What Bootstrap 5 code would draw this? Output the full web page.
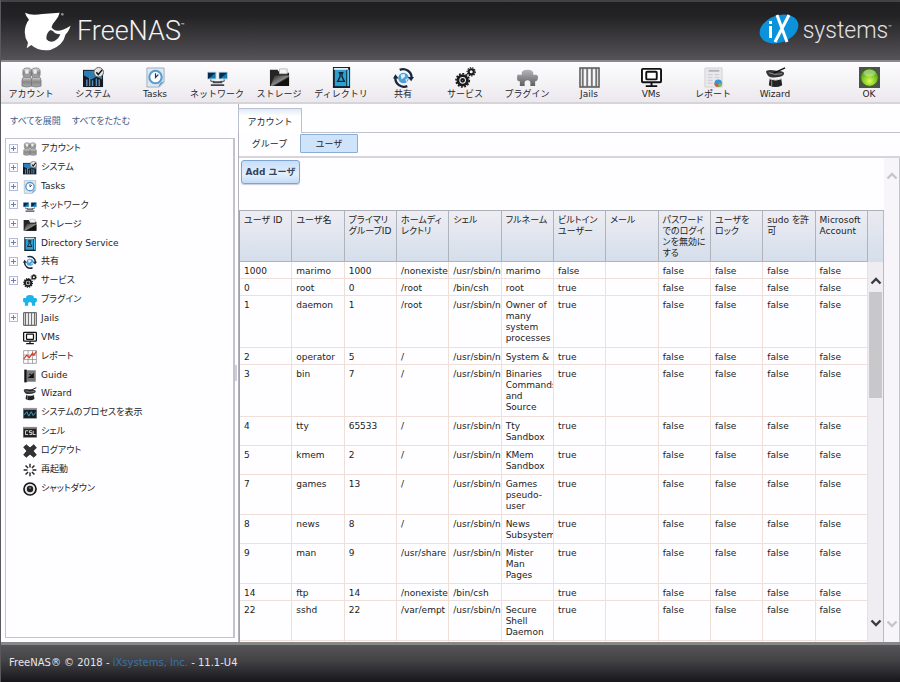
<!DOCTYPE html>
<html lang="ja">
<head>
<meta charset="utf-8">
<meta name="viewport" content="width=device-width, initial-scale=1">
<title>FreeNAS</title>
<link href="https://cdn.jsdelivr.net/npm/bootstrap@5.3.0/dist/css/bootstrap.min.css" rel="stylesheet">
<style>
body{font-family:"DejaVu Sans","Noto Sans CJK JP",sans-serif;font-size:9px;line-height:12px;color:#1c1c24;background:#fefdff;font-feature-settings:"palt";border-left:1px solid #59585c;overflow:hidden}
a{text-decoration:none}
.masthead{height:62px;flex:none;background:linear-gradient(#1f1e20,#232224 25%,#555357);border-top:2px solid #434244;border-bottom:2px solid #89888b;padding:0 8px 0 22px}
.brand-word{font-family:"Roboto",sans-serif;font-weight:300;font-size:27px;line-height:36px;color:#f3f2f4}
.brand-word.second{font-size:23px;line-height:32px;color:#e2e1e3}
.brand-word sup{font-size:6px;font-weight:400;line-height:6px;vertical-align:top;top:9px}
.ix{margin-bottom:4px}
.toolbar{height:42px;flex:none;background:linear-gradient(#fdfcfe,#ebe9ed);border-bottom:2px solid #d6d4d8}
.tool{width:62px;padding:5px 2px 0 0;border:0;background:none;color:#24242c;font-size:9px;line-height:12px;white-space:nowrap}
.tool svg{width:21px;height:21px;display:block;margin:0 auto}
.side{width:234px;flex:none;padding:10px 0 4px 4px}
.side-links{padding:1px 5px 11px;gap:11px}
.side-links a{color:#3f5f8c}
.tree-box{border:1px solid #c3c2cc;border-width:1px 2px 1px 1px}
.tree{height:358px;grid-auto-rows:1fr;margin:0;padding:0 0 0 3px}
.tree li{gap:4px}
.tree button{width:9px;height:9px;padding:0;border:1px solid #b4bcd6;background:#fbfbff;display:grid;place-items:center;margin-right:1px}
.tree button svg{width:5px;height:5px}
.tree .blank{width:9px;margin-right:1px}
.tree .pic{width:14px;height:14px;margin-top:2px}
.tree a{color:#1c1c24}
.splitter{width:3px;flex:none}
.splitter span{width:2px;height:16px;background:#cfced8}
.pane{border-left:1px solid #b3b2bc;padding-top:4px;min-width:0}
.tabs{border-bottom:1px solid #c0c3cb;margin-left:-1px;height:25px}
.tabs button{width:64px;height:25px;border:1px solid #b9bfcd;border-bottom:0;background:linear-gradient(#dfeaf7,#fff 30%);color:#24242c;padding:2px 0 0}
.subtabs{height:25px;padding:1px 0 3px;border-bottom:2px solid #d7d5da}
.subtabs button{border:0;background:none;width:61px;color:#24242c;padding:0}
.subtabs button.on{width:58px;border:1px solid #8aaed3;background:#cfe4fb;border-radius:1px}
.add-btn{font-size:9px;line-height:12px;font-weight:700;color:#35435c;border:1px solid #7da4cf;border-radius:3px;background:linear-gradient(#c7defa,#e2effd 60%,#c4dbf5);height:24px;width:59px;padding:0;white-space:nowrap;margin:2px 0 0 2px;box-shadow:0 1px 1px #ccd;--bs-btn-hover-color:#35435c}
.gridwrap{margin-top:26px;border-top:1px solid #abb0b8}
.users{table-layout:fixed;width:100%;border-left:1px solid #9ea3ab;line-height:11px;font-size:9px;border-collapse:separate;border-spacing:0}
.users th{height:51px;vertical-align:top;font-weight:400;padding:4px 0 0 4px;background:linear-gradient(#eeedf3,#d4deea);border-right:1px solid #afb4bc;border-bottom:1px solid #afb4bc;white-space:nowrap}
.users td{height:17px;vertical-align:top;padding:4px 0 0 4px;border-right:1px solid #f0dfd7;border-bottom:1px solid #efdfd8;overflow:hidden}
.users .l2 td{height:29px}
.users .l3 td{height:40px}
.users .l4 td{height:52px}
.innerbar{width:16px;flex:none;border-right:1px solid #b9bac2}
.innerbar .cap{height:51px;flex:none;background:linear-gradient(#e9eaf2,#d4deea)}
.innerbar .track{background:#efedf1;padding:13px 1px 0}
.innerbar .thumb{height:106px;background:#c8c7ca;margin-top:5px}
.innerbar svg,.outerbar svg{width:12px;height:12px;display:block;margin-left:auto;margin-right:auto;flex:none}
.innerbar svg:last-child{margin-top:auto;margin-bottom:13px}
.outerbar{width:16px;flex:none;background:#f7f5fa;padding:12px 0;border-right:1px solid #c4c3c7}
.foot{height:40px;flex:none;background:linear-gradient(#555456,#444346 40%,#17161b);border-top:3px solid #88878a;color:#e6e5e8;padding:0 8px 2px;font-size:10px}
.foot a{color:#3873ac}
</style>
<script src="https://cdn.jsdelivr.net/npm/bootstrap@5.3.0/dist/js/bootstrap.bundle.min.js"></script>
</head>
<body class="vh-100 d-flex flex-column">
<svg width="0" height="0" class="position-absolute" aria-hidden="true">
<defs>
<linearGradient id="gm" x2="0" y2="1"><stop stop-color="#ddd"/><stop offset=".5" stop-color="#888"/><stop offset="1" stop-color="#aaa"/></linearGradient>
<linearGradient id="gp" x2="0" y2="1"><stop stop-color="#b5b4b7"/><stop offset="1" stop-color="#5e5d61"/></linearGradient>
<linearGradient id="gk" x2="1" y2="1"><stop stop-color="#222"/><stop offset=".5" stop-color="#888"/><stop offset=".6" stop-color="#111"/></linearGradient>
<radialGradient id="gg" cy=".7"><stop stop-color="#d8ff50"/><stop offset="1" stop-color="#62b31c"/></radialGradient>
</defs>
<symbol id="i-users" viewBox="0 0 22 22"><g fill="url(#gm)" stroke="#777" stroke-width=".8"><path d="M1 20V14Q1 10 5 10H8Q11 10 11 14V20Q6 22 1 20ZM11 20V14Q11 10 14 10H17Q21 10 21 14V20Q16 22 11 20Z"/><path d="M2 4Q2 1 6.500 1T11 4V8Q11 11 6.500 11T2 8ZM11 4Q11 1 15.500 1T20 4V8Q20 11 15.500 11T11 8Z"/></g><path d="M4.500 3H8V7H4.500ZM13 3H16.500V7H13Z" fill="#eee"/></symbol>
<symbol id="i-system" viewBox="0 0 22 22"><path d="M0 3H21V21H0Z" fill="#151b24"/><path d="M1 4H20V13L14 10L9 13L1 9Z" fill="#2c7fb4"/><path d="M4 20V13M7 20V11M10 20V14M14 20V12M17 20V13" stroke="#5b8fb6" stroke-width="1.500"/><circle cx="16.500" cy="5.500" r="5" fill="#e5e5e8" stroke="#666"/><path d="M14 5.500L16 8L20 3" fill="none" stroke="#111" stroke-width="1.600"/></symbol>
<symbol id="i-tasks" viewBox="0 0 22 22"><path d="M2 1H20V16L15 21H2Z" fill="#dde7ef" stroke="#9db0bf"/><circle cx="11" cy="10.500" r="6.500" fill="#fff" stroke="#5a9bd0" stroke-width="2.200"/><path d="M11 6.500V11L14 8" fill="none" stroke="#235" stroke-width="1.300"/><path d="M20 15L14 21Q15 16 20 15Z" fill="#4c94cb"/></symbol>
<symbol id="i-network" viewBox="0 0 22 22"><path d="M0 5H10V13H0ZM12 5H22V13H12Z" fill="#c9d3da"/><path d="M1 6H9V12H1ZM13 6H21V12H13Z" fill="#087bb8"/><path d="M1 6H9L2 12H1ZM13 6H21L14 12H13Z" fill="#0a2848"/><path d="M4 13V15H8M18 13V15H14" stroke="#444" fill="none"/><path d="M6 15H16V17H6ZM4 18H18V20H4Z" fill="#41464c"/></symbol>
<symbol id="i-storage" viewBox="0 0 22 22"><path d="M1 3H9L11 6H21V20H1Z" fill="#242424"/><path d="M11 2H19V7H11Z" fill="#f3f3f3" stroke="#bbb"/><path d="M2 19L6 9H21V20H2Z" fill="url(#gk)"/></symbol>
<symbol id="i-directory" viewBox="0 0 22 22"><path d="M2 0H20V22H2Z" fill="#10202c"/><path d="M4 2H16V20H4Z" fill="#2e9fd0"/><path d="M17 3H19V20H17Z" fill="#55c6ef"/><path d="M3 1H18V3H3Z" fill="#d9eef8"/><path d="M8 6H13M9.500 6V10L7 15H14L11.500 10V6" fill="none" stroke="#10202c" stroke-width="1.400"/></symbol>
<symbol id="i-share" viewBox="0 0 22 22"><circle cx="11" cy="11.500" r="5.500" fill="#4b9ed6"/><path d="M8 8L12 7L13 10L9 13ZM13 13L16 11L14 16Z" fill="#d9effb"/><path d="M7 3A9 9 0 0 1 19.500 11M15 20A9 9 0 0 1 2.500 11" fill="none" stroke="#16283f" stroke-width="2.400"/><path d="M15.500 10.500H22L19 15ZM0 12H6L2.500 7.500Z" fill="#16283f"/></symbol>
<symbol id="i-services" viewBox="0 0 22 22"><g fill="none" stroke="#1a1a1a"><circle cx="8" cy="14" r="5" stroke-width="3"/><circle cx="8" cy="14" r="7" stroke-width="1.600" stroke-dasharray="2 1.600"/><circle cx="8" cy="14" r="1.500" stroke-width="2"/><circle cx="17" cy="5" r="2.700" stroke-width="2.200"/><circle cx="17" cy="5" r="4.300" stroke-width="1.200" stroke-dasharray="1.400 1.200"/></g></symbol>
<symbol id="i-plugin" viewBox="0 0 22 22"><path d="M5 8Q4 3 11 3T17 8H20Q22 8 22 11T20 15H19V20H14V17Q14 14 11 14T8 17V20H3V15H2Q0 15 0 11T2 8Z" fill="#1cb2ea"/></symbol>
<symbol id="i-plugin-grey" viewBox="0 0 22 22"><path d="M5 8Q4 3 11 3T17 8H20Q22 8 22 11T20 15H19V20H14V17Q14 14 11 14T8 17V20H3V15H2Q0 15 0 11T2 8Z" fill="url(#gp)"/></symbol>
<symbol id="i-jails" viewBox="0 0 22 22"><path d="M1 1H21V21H1Z" fill="#dcdcde" stroke="#555" stroke-width="1.500"/><path d="M4 1V21M8.500 1V21M13.500 1V21M18 1V21" stroke="#666" stroke-width="1.500"/><path d="M6.300 3V19M15.700 3V19M11 3V19" stroke="#fff" stroke-width="1.500"/></symbol>
<symbol id="i-vms" viewBox="0 0 22 22"><rect x="1" y="2" width="20" height="14" rx="1" fill="#fff" stroke="#111" stroke-width="2"/><rect x="5.500" y="5" width="11" height="8" rx="1" fill="none" stroke="#111" stroke-width="2"/><path d="M11 16V19M5 20H17" stroke="#111" stroke-width="2"/></symbol>
<symbol id="i-report" viewBox="0 0 22 22"><path d="M2 1H20V21H2Z" fill="#e9e9eb" stroke="#d2d2d4"/><path d="M6 4H17" stroke="#b3b3b8" stroke-width="2"/><path d="M5 8H10M12 8H17M5 11H10M12 11H17M5 14H10M5 17H10" stroke="#d0d0d4" stroke-width="1.300"/><circle cx="16" cy="17" r="4" fill="#3c93d5"/><path d="M16 17H20A4 4 0 0 1 16 21Z" fill="#7abf45"/><path d="M16 17V21A4 4 0 0 1 12 17Z" fill="#e2552f"/></symbol>
<symbol id="i-wizard" viewBox="0 0 22 22"><path d="M5 12Q11 15 17 12L18 19Q11 23 4 19Z" fill="#222"/><path d="M1 5Q2 2 12 4Q20 4 20 7T10 11Q3 12 1 5Z" fill="#333"/><path d="M8 7L21 1" stroke="#111" stroke-width="1.500"/><path d="M7 14V20M4 6Q10 9 18 7" stroke="#999" fill="none"/><path d="M5 12.500Q11 15 17 12.500" stroke="#ddd" fill="none"/></symbol>
<symbol id="i-light" viewBox="0 0 22 22"><path d="M0 0H22V22H0Z" fill="#4e524e"/><circle cx="11" cy="11" r="9.300" fill="url(#gg)" stroke="#3d6021"/><ellipse cx="11" cy="6.500" rx="6" ry="3.500" fill="#fff" opacity=".35"/></symbol>
<symbol id="i-chart" viewBox="0 0 22 22"><path d="M1 1H21V21H1ZM1 8H21M1 15H21M8 1V21M15 1V21" fill="#fff" stroke="#777"/><path d="M1 14L6 8L10 12L15 5L17 8L21 2" fill="none" stroke="#d33a22" stroke-width="2"/></symbol>
<symbol id="i-guide" viewBox="0 0 22 22"><path d="M2 1H6V21H2Z" fill="#111"/><path d="M6 2H20V20H6Z" fill="#777"/><path d="M10 8L16 12M16 8V13H10Z" stroke="#111" stroke-width="2" fill="#eee"/></symbol>
<symbol id="i-process" viewBox="0 0 22 22"><path d="M0 3H22V20H0Z" fill="#999"/><path d="M1 6H21V19H1Z" fill="#142027"/><path d="M2 14L6 9L9 16L13 9L16 15L20 10" fill="none" stroke="#4c9eb5" stroke-width="1.500"/></symbol>
<symbol id="i-shell" viewBox="0 0 22 22"><path d="M0 3H22V20H0Z" fill="#888"/><path d="M1 6H21V19H1Z" fill="#221d20"/><path d="M8 9H4V15H8M14 9H10V12H14V15H10M16 9V15H20" fill="none" stroke="#ddd" stroke-width="1.500"/></symbol>
<symbol id="i-logout" viewBox="0 0 22 22"><path d="M5 1L11 6L17 1L21 6L16 11L21 17L17 21L11 16L5 21L1 17L6 11L1 5Z" fill="#333" stroke="#111"/></symbol>
<symbol id="i-reboot" viewBox="0 0 22 22"><path d="M11 1V7M11 15V21M1 11H7M15 11H21M4 4L8 8M14 14L18 18M18 4L14 8M8 14L4 18" stroke="#222" stroke-width="2.200"/></symbol>
<symbol id="i-shutdown" viewBox="0 0 22 22"><circle cx="11" cy="11" r="9.500" fill="#e8e8e8" stroke="#151515" stroke-width="2.600"/><circle cx="11" cy="11" r="5" fill="#222"/><path d="M11 8V11" stroke="#bbb" stroke-width="1.500"/></symbol>
<symbol id="i-plus" viewBox="0 0 5 5"><path d="M0 2H5V3H0ZM2 0H3V5H2Z" fill="#7480a3"/></symbol>
<symbol id="i-up" viewBox="0 0 12 12"><path d="M1.500 8.500L6 4L10.500 8.500" fill="none" stroke="#3c3b3f" stroke-width="2.400"/></symbol>
<symbol id="i-down" viewBox="0 0 12 12"><path d="M1.500 3.500L6 8L10.500 3.500" fill="none" stroke="#3c3b3f" stroke-width="2.400"/></symbol>
</svg>

<header class="masthead d-flex justify-content-between align-items-center">
  <div class="d-flex align-items-center gap-1">
    <svg width="50" height="40" viewBox="70 35 150 120" role="img" aria-label="FreeNAS shark"><path fill="#fff" d="M76 40Q95 50 128 44L180 40Q177 53 166 66Q156 77 156 85L164 92Q180 100 213 79Q206 98 198 105Q190 140 152 152Q115 156 95 137L81 147L85 130Q70 108 78 80Q83 65 88 61Q79 51 76 40Z"/><path fill="#373639" d="M152 92Q139 102 140 119Q147 130 163 126Q178 118 182 105Q166 105 160 95Z"/><circle cx="188" cy="45" r="4" fill="#8d8c8f"/></svg>
    <span class="brand-word">FreeNAS<sup>™</sup></span>
  </div>
  <div class="d-flex align-items-center gap-1">
    <svg class="ix" width="40" height="32" viewBox="0 0 40 32" role="img" aria-label="iX"><ellipse cx="20" cy="16" rx="20" ry="13.500" transform="rotate(-20 20 16)" fill="#0b92da"/><path d="M10 13H13V25H10ZM10 8H13V11H10Z" fill="#fff"/><path d="M18 2L28 29M30 2L16 29" stroke="#fff" stroke-width="3" fill="none"/></svg>
    <span class="brand-word second">systems<sup>™</sup></span>
  </div>
</header>

<nav class="toolbar d-flex align-items-start" aria-label="メイン">
  <button class="tool"><svg><use href="#i-users"/></svg>アカウント</button>
  <button class="tool"><svg><use href="#i-system"/></svg>システム</button>
  <button class="tool"><svg><use href="#i-tasks"/></svg>Tasks</button>
  <button class="tool"><svg><use href="#i-network"/></svg>ネットワーク</button>
  <button class="tool"><svg><use href="#i-storage"/></svg>ストレージ</button>
  <button class="tool"><svg><use href="#i-directory"/></svg>ディレクトリ</button>
  <button class="tool"><svg><use href="#i-share"/></svg>共有</button>
  <button class="tool"><svg><use href="#i-services"/></svg>サービス</button>
  <button class="tool"><svg><use href="#i-plugin-grey"/></svg>プラグイン</button>
  <button class="tool"><svg><use href="#i-jails"/></svg>Jails</button>
  <button class="tool"><svg><use href="#i-vms"/></svg>VMs</button>
  <button class="tool"><svg><use href="#i-report"/></svg>レポート</button>
  <button class="tool"><svg><use href="#i-wizard"/></svg>Wizard</button>
  <button class="tool ms-auto pe-0"><svg><use href="#i-light"/></svg>OK</button>
</nav>

<main class="d-flex flex-grow-1 overflow-hidden">
  <aside class="side d-flex flex-column">
    <div class="side-links d-flex"><a href="#">すべてを展開</a><a href="#">すべてをたたむ</a></div>
    <div class="tree-box flex-grow-1">
      <ul class="tree d-grid list-unstyled">
        <li class="d-flex align-items-center"><button aria-label="展開"><svg><use href="#i-plus"/></svg></button><svg class="pic"><use href="#i-users"/></svg><a href="#">アカウント</a></li>
        <li class="d-flex align-items-center"><button aria-label="展開"><svg><use href="#i-plus"/></svg></button><svg class="pic"><use href="#i-system"/></svg><a href="#">システム</a></li>
        <li class="d-flex align-items-center"><button aria-label="展開"><svg><use href="#i-plus"/></svg></button><svg class="pic"><use href="#i-tasks"/></svg><a href="#">Tasks</a></li>
        <li class="d-flex align-items-center"><button aria-label="展開"><svg><use href="#i-plus"/></svg></button><svg class="pic"><use href="#i-network"/></svg><a href="#">ネットワーク</a></li>
        <li class="d-flex align-items-center"><button aria-label="展開"><svg><use href="#i-plus"/></svg></button><svg class="pic"><use href="#i-storage"/></svg><a href="#">ストレージ</a></li>
        <li class="d-flex align-items-center"><button aria-label="展開"><svg><use href="#i-plus"/></svg></button><svg class="pic"><use href="#i-directory"/></svg><a href="#">Directory Service</a></li>
        <li class="d-flex align-items-center"><button aria-label="展開"><svg><use href="#i-plus"/></svg></button><svg class="pic"><use href="#i-share"/></svg><a href="#">共有</a></li>
        <li class="d-flex align-items-center"><button aria-label="展開"><svg><use href="#i-plus"/></svg></button><svg class="pic"><use href="#i-services"/></svg><a href="#">サービス</a></li>
        <li class="d-flex align-items-center"><span class="blank"></span><svg class="pic"><use href="#i-plugin"/></svg><a href="#">プラグイン</a></li>
        <li class="d-flex align-items-center"><button aria-label="展開"><svg><use href="#i-plus"/></svg></button><svg class="pic"><use href="#i-jails"/></svg><a href="#">Jails</a></li>
        <li class="d-flex align-items-center"><span class="blank"></span><svg class="pic"><use href="#i-vms"/></svg><a href="#">VMs</a></li>
        <li class="d-flex align-items-center"><span class="blank"></span><svg class="pic"><use href="#i-chart"/></svg><a href="#">レポート</a></li>
        <li class="d-flex align-items-center"><span class="blank"></span><svg class="pic"><use href="#i-guide"/></svg><a href="#">Guide</a></li>
        <li class="d-flex align-items-center"><span class="blank"></span><svg class="pic"><use href="#i-wizard"/></svg><a href="#">Wizard</a></li>
        <li class="d-flex align-items-center"><span class="blank"></span><svg class="pic"><use href="#i-process"/></svg><a href="#">システムのプロセスを表示</a></li>
        <li class="d-flex align-items-center"><span class="blank"></span><svg class="pic"><use href="#i-shell"/></svg><a href="#">シェル</a></li>
        <li class="d-flex align-items-center"><span class="blank"></span><svg class="pic"><use href="#i-logout"/></svg><a href="#">ログアウト</a></li>
        <li class="d-flex align-items-center"><span class="blank"></span><svg class="pic"><use href="#i-reboot"/></svg><a href="#">再起動</a></li>
        <li class="d-flex align-items-center"><span class="blank"></span><svg class="pic"><use href="#i-shutdown"/></svg><a href="#">シャットダウン</a></li>
      </ul>
    </div>
  </aside>
  <div class="splitter d-flex align-items-center"><span></span></div>

  <section class="pane flex-grow-1 d-flex flex-column">
    <div class="tabs flex-shrink-0"><button>アカウント</button></div>
    <div class="subtabs d-flex flex-shrink-0"><button>グループ</button><button class="on">ユーザ</button></div>
    <div class="d-flex flex-grow-1 overflow-hidden">
      <div class="flex-grow-1 d-flex flex-column overflow-hidden">
        <div><button class="add-btn btn">Add ユーザ</button></div>
        <div class="gridwrap d-flex flex-grow-1 overflow-hidden">
          <div class="flex-grow-1 overflow-hidden">
          <table class="users">
            <thead><tr><th>ユーザ ID</th><th>ユーザ名</th><th>プライマリ<br>グループID</th><th>ホームディ<br>レクトリ</th><th>シェル</th><th>フルネーム</th><th>ビルトイン<br>ユーザー</th><th>メール</th><th>パスワード<br>でのログイ<br>ンを無効に<br>する</th><th>ユーザを<br>ロック</th><th>sudo を許<br>可</th><th>Microsoft<br>Account</th></tr></thead>
            <tbody>
            <tr><td>1000</td><td>marimo</td><td>1000</td><td>/nonexiste</td><td>/usr/sbin/n</td><td>marimo</td><td>false</td><td></td><td>false</td><td>false</td><td>false</td><td>false</td></tr>
            <tr><td>0</td><td>root</td><td>0</td><td>/root</td><td>/bin/csh</td><td>root</td><td>true</td><td></td><td>false</td><td>false</td><td>false</td><td>false</td></tr>
            <tr class="l4"><td>1</td><td>daemon</td><td>1</td><td>/root</td><td>/usr/sbin/n</td><td>Owner of many system processes</td><td>true</td><td></td><td>false</td><td>false</td><td>false</td><td>false</td></tr>
            <tr><td>2</td><td>operator</td><td>5</td><td>/</td><td>/usr/sbin/n</td><td>System &amp;</td><td>true</td><td></td><td>false</td><td>false</td><td>false</td><td>false</td></tr>
            <tr class="l4"><td>3</td><td>bin</td><td>7</td><td>/</td><td>/usr/sbin/n</td><td>Binaries Commands and Source</td><td>true</td><td></td><td>false</td><td>false</td><td>false</td><td>false</td></tr>
            <tr class="l2"><td>4</td><td>tty</td><td>65533</td><td>/</td><td>/usr/sbin/n</td><td>Tty Sandbox</td><td>true</td><td></td><td>false</td><td>false</td><td>false</td><td>false</td></tr>
            <tr class="l2"><td>5</td><td>kmem</td><td>2</td><td>/</td><td>/usr/sbin/n</td><td>KMem Sandbox</td><td>true</td><td></td><td>false</td><td>false</td><td>false</td><td>false</td></tr>
            <tr class="l3"><td>7</td><td>games</td><td>13</td><td>/</td><td>/usr/sbin/n</td><td>Games pseudo-user</td><td>true</td><td></td><td>false</td><td>false</td><td>false</td><td>false</td></tr>
            <tr class="l2"><td>8</td><td>news</td><td>8</td><td>/</td><td>/usr/sbin/n</td><td>News Subsystem</td><td>true</td><td></td><td>false</td><td>false</td><td>false</td><td>false</td></tr>
            <tr class="l3"><td>9</td><td>man</td><td>9</td><td>/usr/share</td><td>/usr/sbin/n</td><td>Mister<br>Man<br>Pages</td><td>true</td><td></td><td>false</td><td>false</td><td>false</td><td>false</td></tr>
            <tr><td>14</td><td>ftp</td><td>14</td><td>/nonexiste</td><td>/bin/csh</td><td></td><td>true</td><td></td><td>false</td><td>false</td><td>false</td><td>false</td></tr>
            <tr class="l3"><td>22</td><td>sshd</td><td>22</td><td>/var/empt</td><td>/usr/sbin/n</td><td>Secure Shell Daemon</td><td>true</td><td></td><td>false</td><td>false</td><td>false</td><td>false</td></tr>
            <tr><td></td><td></td><td></td><td></td><td></td><td></td><td></td><td></td><td></td><td></td><td></td><td></td></tr>
            </tbody>
          </table>
          </div>
          <div class="innerbar d-flex flex-column">
            <div class="cap"></div>
            <div class="track flex-grow-1 d-flex flex-column"><svg><use href="#i-up"/></svg><div class="thumb"></div><svg><use href="#i-down"/></svg></div>
          </div>
        </div>
      </div>
      <div class="outerbar d-flex flex-column justify-content-between"><svg class="opacity-25"><use href="#i-up"/></svg><svg class="opacity-25"><use href="#i-down"/></svg></div>
    </div>
  </section>
</main>

<footer class="foot d-flex align-items-center"><span>FreeNAS® © 2018 - <a href="#">iXsystems, Inc.</a> - 11.1-U4</span></footer>
</body>
</html>
